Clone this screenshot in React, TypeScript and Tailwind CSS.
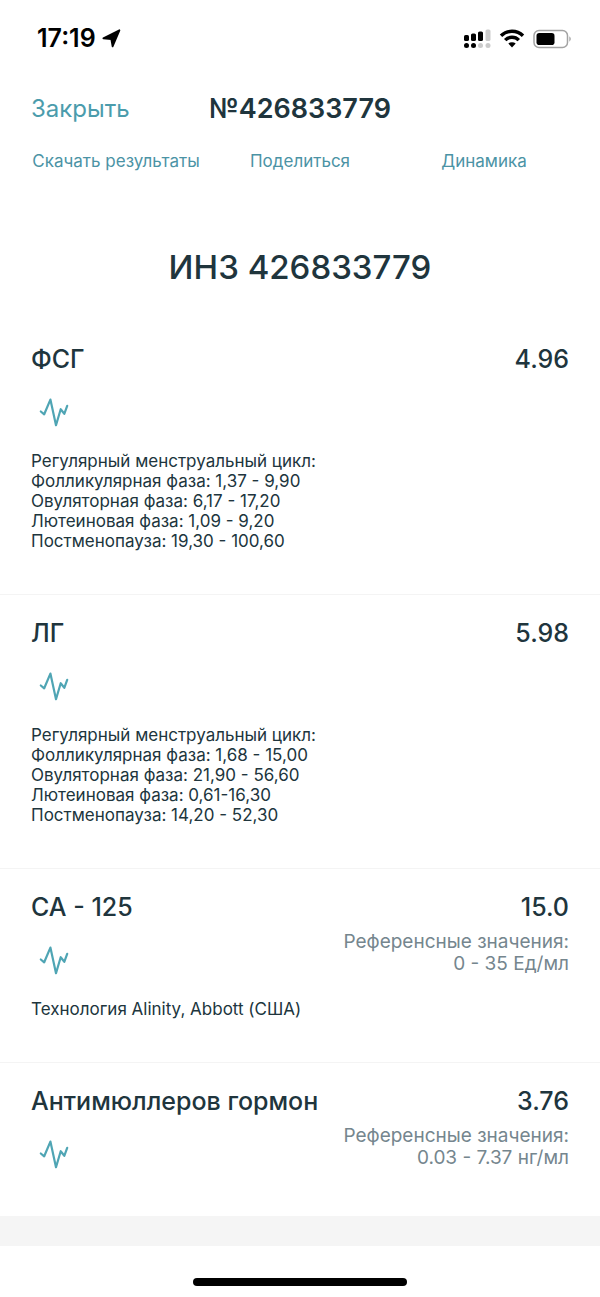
import { clsx } from "clsx";

type Result = {
  name: string;
  value: string;
  reference?: string;
  notes?: string[];
};

const results: Result[] = [
  {
    name: "ФСГ",
    value: "4.96",
    notes: [
      "Регулярный менструальный цикл:",
      "Фолликулярная фаза: 1,37 - 9,90",
      "Овуляторная фаза: 6,17 - 17,20",
      "Лютеиновая фаза: 1,09 - 9,20",
      "Постменопауза: 19,30 - 100,60",
    ],
  },
  {
    name: "ЛГ",
    value: "5.98",
    notes: [
      "Регулярный менструальный цикл:",
      "Фолликулярная фаза: 1,68 - 15,00",
      "Овуляторная фаза: 21,90 - 56,60",
      "Лютеиновая фаза: 0,61-16,30",
      "Постменопауза: 14,20 - 52,30",
    ],
  },
  {
    name: "СА - 125",
    value: "15.0",
    reference: "0 - 35 Ед/мл",
    notes: ["Технология Alinity, Abbott (США)"],
  },
  {
    name: "Антимюллеров гормон",
    value: "3.76",
    reference: "0.03 - 7.37 нг/мл",
  },
];

const actions = ["Скачать результаты", "Поделиться", "Динамика"];

function LocationArrow() {
  return (
    <svg width="19" height="19" viewBox="0 0 19 19" aria-hidden="true">
      <path
        d="M17.4 1.3 L10.6 17.4 L9.3 10 L1.4 9.3 Z"
        fill="#000"
        stroke="#000"
        strokeWidth="1.8"
        strokeLinejoin="round"
      />
    </svg>
  );
}

function SignalIcon() {
  return (
    <svg width="27" height="20" viewBox="0 0 27 20" aria-hidden="true">
      <rect x="0" y="6" width="5" height="6" rx="1.6" />
      <rect x="7" y="4.5" width="5" height="7.5" rx="1.6" />
      <rect x="14" y="2.5" width="5" height="9.5" rx="1.6" />
      <rect x="21.5" y="0.5" width="5" height="11.5" rx="1.6" fill="#cbcbcb" />
      <circle cx="2.5" cy="16.5" r="2.5" />
      <circle cx="9.5" cy="16.5" r="2.5" />
      <circle cx="16.5" cy="16.5" r="2.5" fill="#cbcbcb" />
      <circle cx="24" cy="16.5" r="2.5" fill="#cbcbcb" />
    </svg>
  );
}

function WifiIcon() {
  return (
    <svg width="26" height="20" viewBox="0 0 26 20" fill="none" stroke="#000" aria-hidden="true">
      <path d="M2 6.8 A15.6 15.6 0 0 1 24 6.8" strokeWidth="3.4" />
      <path d="M6.2 11.2 A9.4 9.4 0 0 1 19.8 11.2" strokeWidth="3.4" />
      <path d="M9.3 14.6 A5.4 5.4 0 0 1 16.7 14.6 L13 18.4 Z" fill="#000" stroke="none" />
    </svg>
  );
}

function BatteryIcon() {
  return (
    <svg width="39" height="20" viewBox="0 0 39 20" aria-hidden="true">
      <rect x="1" y="1.5" width="33.5" height="17" rx="5" fill="none" stroke="#a3a3a3" strokeWidth="1.5" />
      <rect x="3.5" y="4" width="18" height="12" rx="2.8" />
      <path d="M36.3 7.3 Q39.3 10 36.3 12.7 Z" fill="#a3a3a3" />
    </svg>
  );
}

function StatusBar() {
  return (
    <div className="flex h-[77px] items-center justify-between pr-7 pl-[37px] text-black">
      <div className="flex items-center gap-1.5">
        <span className="text-[25px] font-semibold">17:19</span>
        <LocationArrow />
      </div>
      <div className="flex items-center gap-2">
        <SignalIcon />
        <WifiIcon />
        <BatteryIcon />
      </div>
    </div>
  );
}

function PulseIcon() {
  return (
    <svg
      width="30"
      height="30"
      viewBox="0 0 30 30"
      fill="none"
      stroke="#4fa5b4"
      strokeWidth="2.2"
      strokeLinecap="round"
      strokeLinejoin="round"
      aria-hidden="true"
    >
      <path d="M1.8 14.5 L5.2 17.3 L11.4 2.6 L17 28.2 L21.7 12.2 L25.3 16.8 L28.2 8.8" />
    </svg>
  );
}

function ResultCard({ result, last }: { result: Result; last: boolean }) {
  return (
    <section className={clsx("px-[31px] pt-5 pb-[43px]", !last && "border-b border-[#f4f4f4]")}>
      <div className="flex justify-between">
        <div>
          <h2 className="text-[25px] leading-9 font-medium">{result.name}</h2>
          <button
            type="button"
            aria-label={`График: ${result.name}`}
            className="mt-4 ml-1 flex h-[38px] w-[38px] items-center justify-center"
          >
            <PulseIcon />
          </button>
        </div>
        <div className="text-right">
          <p className="text-[25px] leading-9 font-medium">{result.value}</p>
          {result.reference && (
            <div className="mt-1.5 text-[19px] leading-[22px] text-[#75868e]">
              <p>Референсные значения:</p>
              <p>{result.reference}</p>
            </div>
          )}
        </div>
      </div>
      {result.notes && (
        <div className="mt-5 text-[17px] leading-5">
          {result.notes.map((note) => (
            <p key={note}>{note}</p>
          ))}
        </div>
      )}
    </section>
  );
}

export default function App() {
  return (
    <div className="bg-white font-['Inter','Liberation_Sans',sans-serif] text-[#20353d]">
      <StatusBar />

      <header>
        <div className="grid h-16 grid-cols-[1fr_auto_1fr] items-center px-[31px]">
          <button type="button" className="justify-self-start text-2xl text-[#4b9cac]">
            Закрыть
          </button>
          <h1 className="text-[27px] font-semibold">№426833779</h1>
        </div>
        <nav className="grid h-[42px] grid-cols-3 items-center px-6">
          {actions.map((label) => (
            <button key={label} type="button" className="text-[17px] text-[#4b93a5]">
              {label}
            </button>
          ))}
        </nav>
      </header>

      <main>
        <p className="pt-[61px] pb-[31px] text-center text-[33px] leading-[46px] font-medium">
          ИНЗ 426833779
        </p>
        {results.map((result, index) => (
          <ResultCard key={result.name} result={result} last={index === results.length - 1} />
        ))}
      </main>

      <div className="h-[30px] bg-[#f5f5f5]" />
      <footer className="flex justify-center pt-8 pb-3">
        <div className="h-2 w-[214px] rounded-full bg-black" />
      </footer>
    </div>
  );
}
